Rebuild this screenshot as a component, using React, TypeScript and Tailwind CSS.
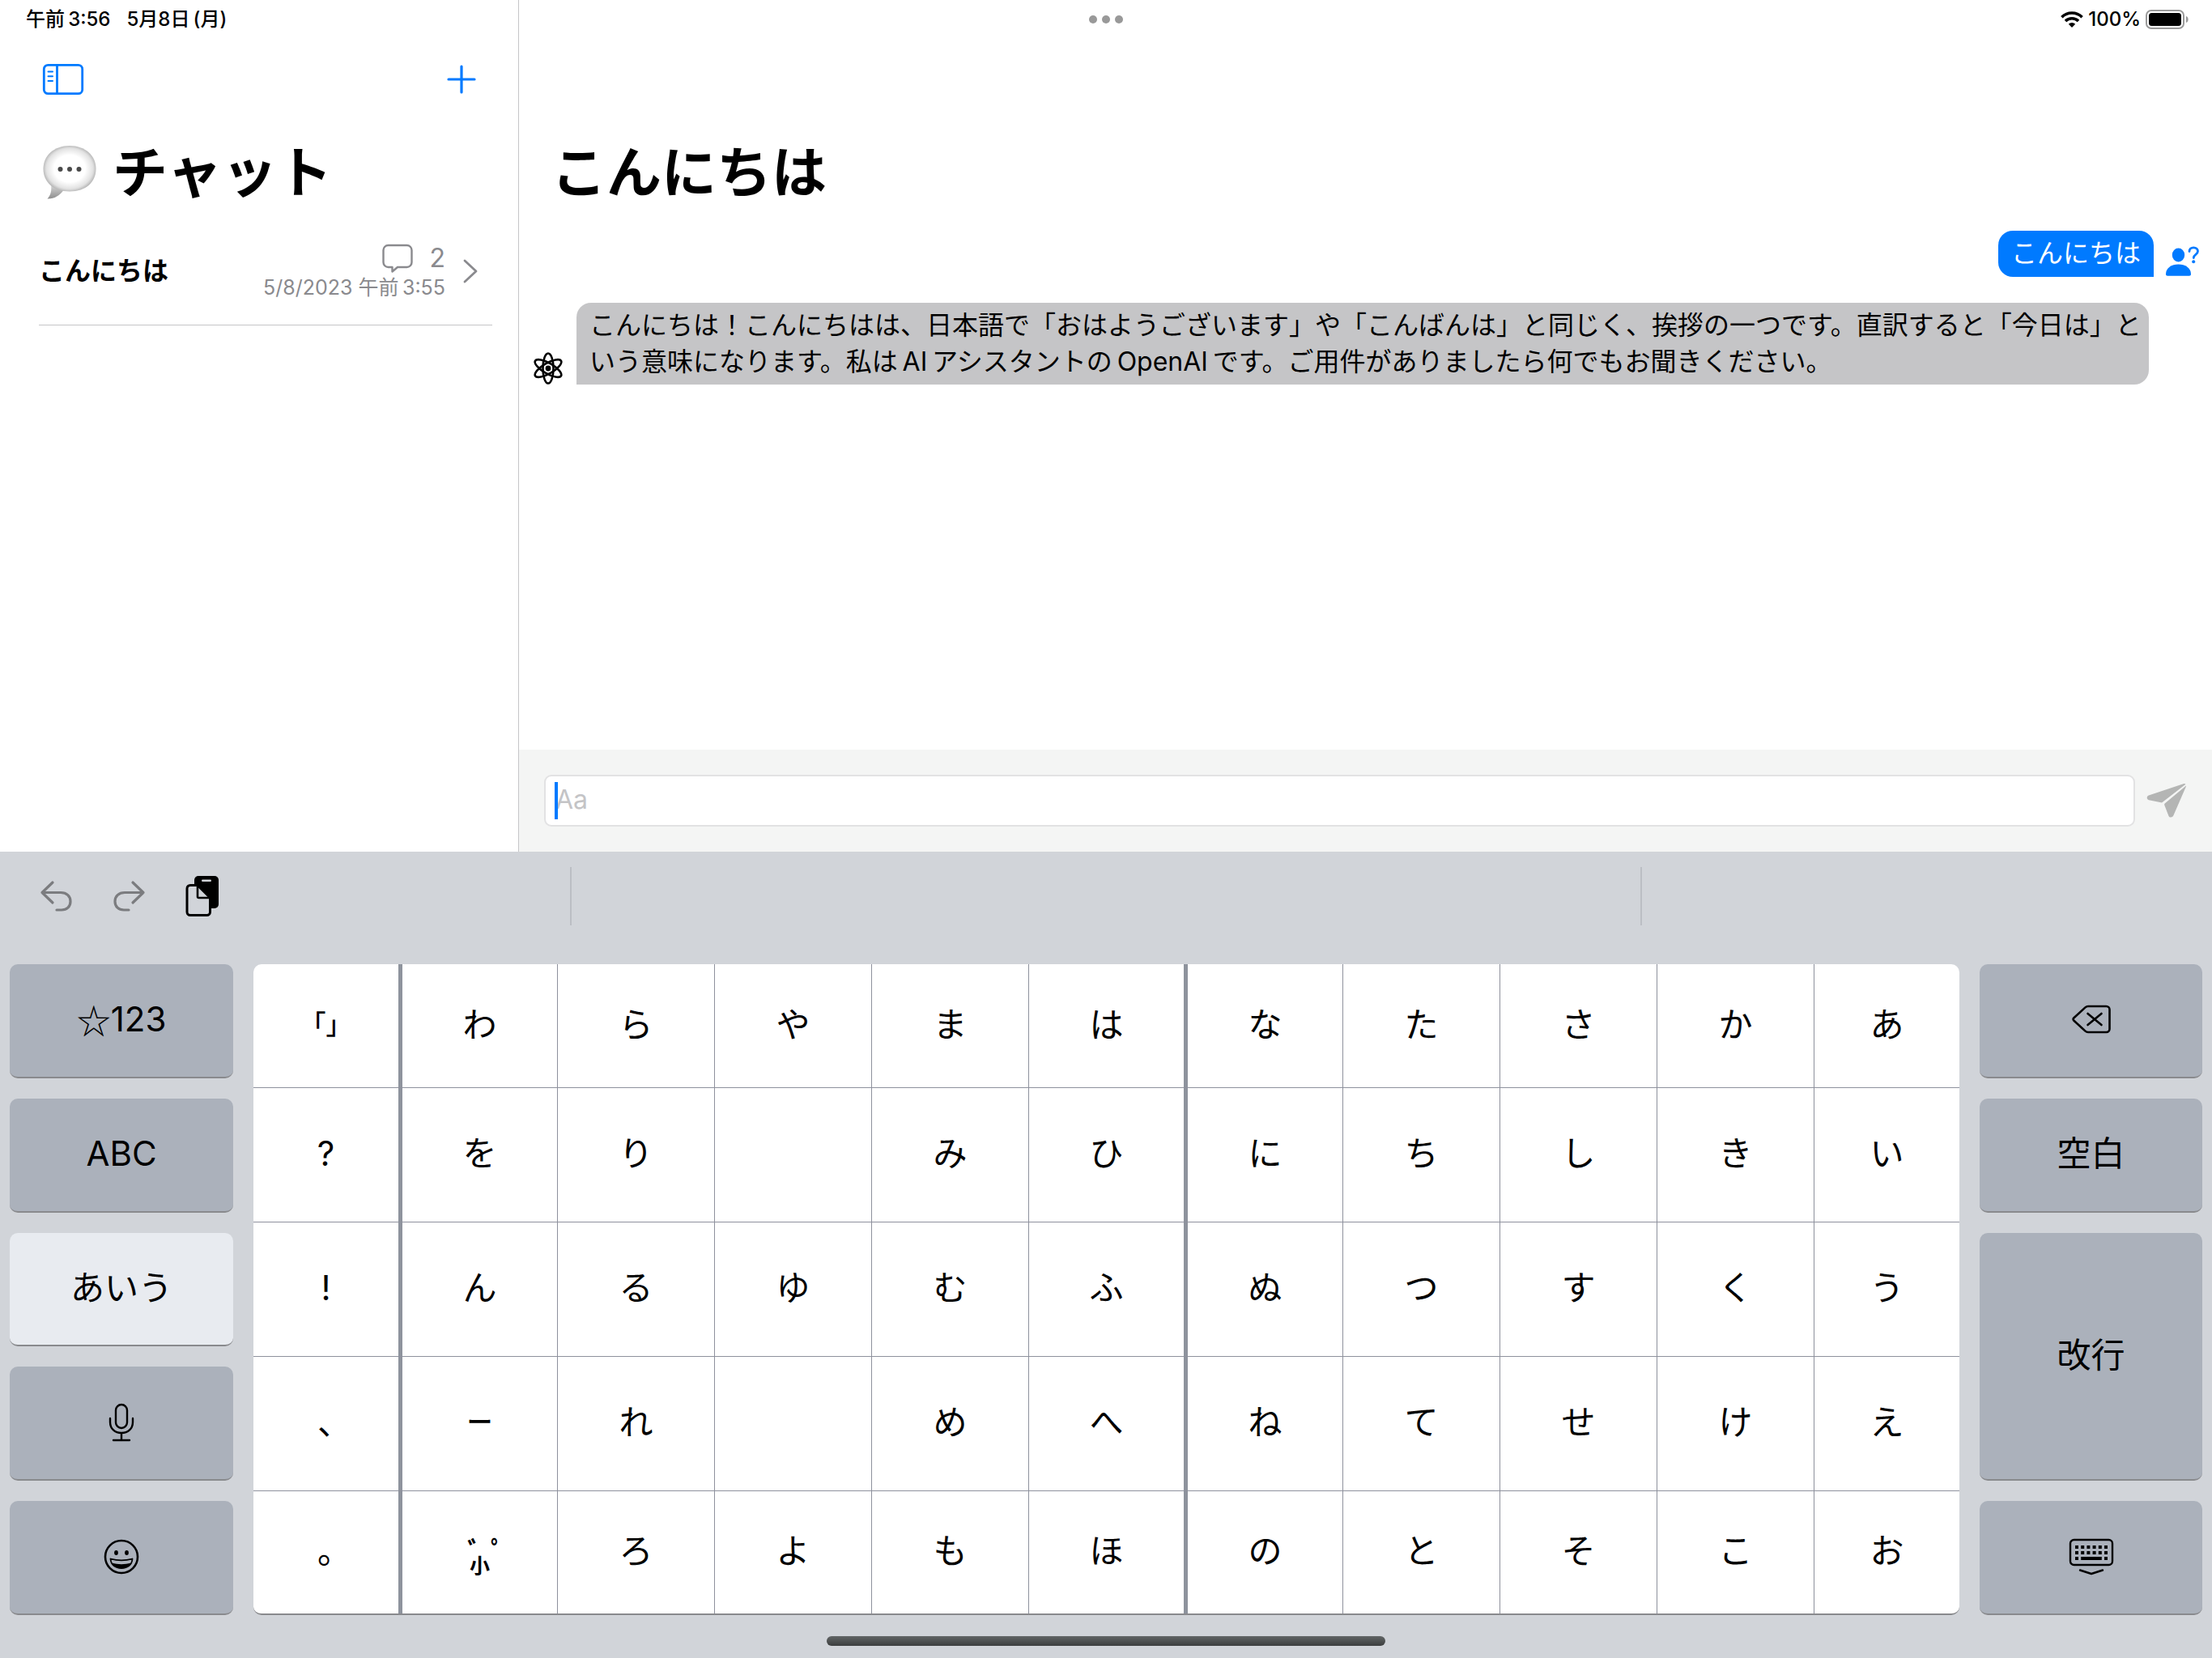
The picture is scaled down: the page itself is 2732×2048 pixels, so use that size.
import type { ReactNode } from "react";

const kanaRows = [
  ["「」", "わ", "ら", "や", "ま", "は", "な", "た", "さ", "か", "あ"],
  ["?", "を", "り", "", "み", "ひ", "に", "ち", "し", "き", "い"],
  ["!", "ん", "る", "ゆ", "む", "ふ", "ぬ", "つ", "す", "く", "う"],
  ["、", "ー", "れ", "", "め", "へ", "ね", "て", "せ", "け", "え"],
  ["。", "小", "ろ", "よ", "も", "ほ", "の", "と", "そ", "こ", "お"],
];

// Thin spaces separate Japanese from Latin text
const reply =
  "こんにちは！こんにちはは、日本語で「おはようございます」や「こんばんは」と同じく、挨拶の一つです。直訳すると「今日は」という意味になります。私は\u2009AI\u2009アシスタントの\u2009OpenAI\u2009です。ご用件がありましたら何でもお聞きください。";

function StatusBar() {
  return (
    <div className="absolute inset-x-0 top-0 flex h-12 items-center justify-between pl-8 pr-7 text-2xl font-medium">
      <div className="flex gap-5">
        <span>{"午前\u20093:56"}</span>
        <span>{"5月8日\u2009(月)"}</span>
      </div>
      <button type="button" aria-label="マルチタスク" className="absolute left-1/2 flex -translate-x-1/2 gap-[6px]">
        <span className="size-[10px] rounded-full bg-[#999999]" />
        <span className="size-[10px] rounded-full bg-[#999999]" />
        <span className="size-[10px] rounded-full bg-[#999999]" />
      </button>
      <div className="flex items-center gap-[6px]">
        <svg viewBox="0 0 28 20" className="h-5 w-7" fill="none" stroke="currentColor">
          <path d="M1.4 7.2a18 18 0 0 1 25.2 0" strokeWidth="3.6" />
          <path d="M6 12a11.500 11.500 0 0 1 16 0" strokeWidth="3.6" />
          <path d="M14 20l-4.200-4.300a6 6 0 0 1 8.400 0z" fill="currentColor" stroke="none" />
        </svg>
        <span>100%</span>
        <svg viewBox="0 0 54 24" className="h-6 w-[54px]">
          <rect x="1" y="1" width="46" height="22" rx="6" fill="none" stroke="#9a9a9a" strokeWidth="2" />
          <rect x="4" y="4" width="40" height="16" rx="3.500" />
          <path d="M50 8c3.500 1 3.500 7 0 8z" fill="#9a9a9a" />
        </svg>
      </div>
    </div>
  );
}

function SpeechBalloon() {
  return (
    <svg viewBox="0 0 66 68" className="h-[68px] w-[66px]">
      <defs>
        <radialGradient id="balloon" cx="0.5" cy="0.5" r="0.54">
          <stop offset="0.55" stopColor="#ffffff" />
          <stop offset="0.82" stopColor="#e2e2e2" />
          <stop offset="1" stopColor="#a4a4a4" />
        </radialGradient>
        <linearGradient id="tail" x1="0" y1="0" x2="0" y2="1">
          <stop offset="0" stopColor="#dcdcdc" />
          <stop offset="1" stopColor="#8e8e8e" />
        </linearGradient>
      </defs>
      <path d="M10 48c1 8 0 14-4.500 18.500C13 67 21 63 26 55z" fill="url(#tail)" />
      <path d="M33 1c19 0 32.500 12 32.500 28.500S53 57.500 33 57.500.500 46 .500 29.500 14 1 33 1z" fill="url(#balloon)" />
      <circle cx="21.500" cy="30" r="3" fill="#4a4a4a" />
      <circle cx="33" cy="30" r="3" fill="#4a4a4a" />
      <circle cx="44.500" cy="30" r="3" fill="#4a4a4a" />
    </svg>
  );
}

function Sidebar() {
  return (
    <aside className="w-[641px] shrink-0 border-r border-[#c6c6c8] pt-[78px]">
      <div className="flex h-10 items-center justify-between px-[52px] text-[#007aff]">
        <button type="button" aria-label="サイドバー">
          <svg viewBox="0 0 52 40" className="h-10 w-[52px]" fill="none" stroke="currentColor" strokeWidth="2.800" strokeLinecap="round">
            <rect x="2.300" y="2.300" width="47.400" height="35.400" rx="5" />
            <path d="M18.500 2.300v35.400" />
            <path d="M7.500 10.500h5.500M7.500 16.300h5.500M7.500 22h5.500" strokeWidth="2" />
          </svg>
        </button>
        <button type="button" aria-label="新規チャット">
          <svg viewBox="0 0 36 36" className="size-9" fill="none" stroke="currentColor" strokeWidth="3.200" strokeLinecap="round">
            <path d="M18 2v32M2 18h32" />
          </svg>
        </button>
      </div>
      <h1 className="mt-10 flex h-[100px] items-center gap-5 pt-[10px] pl-[53px] text-[68px] leading-none font-bold">
        <SpeechBalloon />
        チャット
      </h1>
      <a href="#chat" className="mt-6 mr-8 ml-12 flex h-[120px] items-center border-b border-[#c6c6c8] pr-[18px] pb-[13px]">
        <span className="flex-1 text-[32px] font-bold">こんにちは</span>
        <span className="flex flex-col items-end text-[#8a8a8e]">
          <span className="flex items-center gap-5 text-[32px] leading-10">
            <svg viewBox="0 0 38 36" className="h-9 w-[38px]" fill="none" stroke="currentColor" strokeWidth="2.400" strokeLinejoin="round">
              <path d="M7.500 2h23a6 6 0 0 1 6 6v15a6 6 0 0 1-6 6H19l-6.500 5.500V29h-5a6 6 0 0 1-6-6V8a6 6 0 0 1 6-6z" />
            </svg>
            2
          </span>
          <span className="text-[25px] leading-8">{"5/8/2023 午前\u20093:55"}</span>
        </span>
        <svg viewBox="0 0 18 30" className="ml-[22px] h-[30px] w-[18px]" fill="none" stroke="#8a8a8e" strokeWidth="2.800" strokeLinecap="round" strokeLinejoin="round">
          <path d="M2 2l14 13L2 28" />
        </svg>
      </a>
    </aside>
  );
}

function AtomIcon() {
  return (
    <svg viewBox="0 0 38 42" className="h-[42px] w-[38px] shrink-0" fill="none" stroke="black" strokeWidth="2.600">
      <ellipse cx="19" cy="22" rx="6.500" ry="18.500" />
      <ellipse cx="19" cy="22" rx="6.500" ry="18.500" transform="rotate(60 19 22)" />
      <ellipse cx="19" cy="22" rx="6.500" ry="18.500" transform="rotate(-60 19 22)" />
      <circle cx="19" cy="22" r="3.400" fill="black" stroke="none" />
    </svg>
  );
}

function PersonIcon() {
  return (
    <svg viewBox="0 0 42 38" className="h-[38px] w-[42px] shrink-0" fill="#007aff">
      <ellipse cx="16.500" cy="11" rx="7.700" ry="8.500" />
      <path d="M1 34.500C1 27 8 22.500 16.500 22.500S32 27 32 34.500c0 1.600-.8 2.200-2.200 2.200H3.200C1.800 36.700 1 36.100 1 34.500z" />
      <path d="M30 6.500c0-3 2.200-4.700 5.200-4.700s5.300 1.800 5.300 4.500c0 4.300-5.200 3.800-5.200 8.200" fill="none" stroke="#007aff" strokeWidth="2.800" strokeLinecap="round" />
      <circle cx="35.200" cy="19.300" r="2" />
    </svg>
  );
}

function Chat() {
  return (
    <main className="flex flex-1 flex-col">
      <h2 className="mt-[163px] pl-10 text-[68px] leading-[100px] font-bold">こんにちは</h2>
      <div className="mt-[22px] flex items-end justify-end gap-[14px] pr-4">
        <p className="rounded-[18px] rounded-br-none bg-[#007aff] px-4 pt-[5px] pb-[7px] text-[32px] leading-[45px] text-white">
          こんにちは
        </p>
        <PersonIcon />
      </div>
      <div className="mt-8 flex items-end gap-4 pr-[78px] pl-[17px]">
        <AtomIcon />
        <p className="flex-1 rounded-[18px] rounded-bl-none bg-[#c5c5c7] pt-[5px] pb-[6px] pl-4 text-[32px] leading-[45px]">
          {reply}
        </p>
      </div>
      <form className="mt-auto flex h-[126px] items-center gap-[14px] bg-[#f4f5f4] pr-[31px] pl-[31px]">
        <div className="relative flex-1">
          <input
            aria-label="メッセージ"
            placeholder="Aa"
            className="block h-16 w-full rounded-[9px] border-2 border-[#e2e2e3] bg-white pb-1 pl-3 text-[32px] outline-none placeholder:text-[#c4c4c6]"
          />
          <span className="absolute top-[9px] left-[13px] h-[46px] w-1 bg-[#007aff]" />
        </div>
        <button type="button" aria-label="送信">
          <svg viewBox="0 0 50 44" className="h-11 w-[50px]" fill="#b4b5b4">
            <path d="M2.800 15.500L45.500 1.200c1.500-.5 2.400-.1 2.900.6L20 23.800c-.6.500-1.200.7-2 .5L3 21.200c-3-.8-3-4.700-.2-5.700z" />
            <path d="M49 3.500c.1.700-.1 1.300-.5 2L33.300 40.600c-1.200 2.700-5 2.700-6-.2l-5-13c-.3-.9-.2-1.400.4-2z" />
          </svg>
        </button>
      </form>
    </main>
  );
}

function Key({ label, className = "bg-[#abb1bb]", children }: { label?: string; className?: string; children: ReactNode }) {
  return (
    <button
      type="button"
      aria-label={label}
      className={`flex items-center justify-center rounded-[10px] border-b-2 border-[#898a8d] pb-[2px] text-[42px] leading-none ${className}`}
    >
      {children}
    </button>
  );
}

function ShortcutBar() {
  return (
    <div className="flex h-[110px] items-center pl-12">
      <button type="button" aria-label="取り消す" className="text-[#7b7c7f]">
        <svg viewBox="0 0 42 42" className="size-[42px]" fill="none" stroke="currentColor" strokeWidth="3.200" strokeLinecap="round" strokeLinejoin="round">
          <path d="M17 4L4 16.500 17 29M4 16.500h23c7.500 0 12 4.500 12 11s-4.500 10.500-11 10.500h-6" />
        </svg>
      </button>
      <button type="button" aria-label="やり直す" className="ml-[49px] text-[#7b7c7f]">
        <svg viewBox="0 0 42 42" className="size-[42px]" fill="none" stroke="currentColor" strokeWidth="3.200" strokeLinecap="round" strokeLinejoin="round">
          <path d="M25 4l13 12.500L25 29M38 16.500H15c-7.500 0-12 4.500-12 11S7.500 38 14 38h6" />
        </svg>
      </button>
      <button type="button" aria-label="ペースト" className="ml-12">
        <svg viewBox="0 0 42 50" className="h-[50px] w-[42px]">
          <path d="M16 0h20a5 5 0 0 1 5 5v30a5 5 0 0 1-5 5H11V5a5 5 0 0 1 5-5z" />
          <rect x="20" y="4.500" width="12" height="2.600" rx="1.300" fill="#d1d4d9" />
          <path d="M15 11.500H6a4 4 0 0 0-4 4v29a4 4 0 0 0 4 4h20.500a4 4 0 0 0 4-4V27z" fill="#d1d4d9" stroke="black" strokeWidth="3" strokeLinejoin="round" />
          <path d="M15 12v13.500a1.500 1.500 0 0 0 1.500 1.500H30" fill="none" stroke="black" strokeWidth="2.600" />
        </svg>
      </button>
      <div className="ml-[433px] h-[72px] w-[1324px] border-x-2 border-[#bbbec4]" />
    </div>
  );
}

function KanaKey({ char, column }: { char: string; column: number }) {
  const thick = column === 0 || column === 5;
  const last = column === 10;
  const edge = last ? "" : thick ? "border-r-[5px] border-[#8e939d]" : "border-r border-[#8e919d]";
  if (char === "小") {
    return (
      <button type="button" aria-label="濁点・半濁点・小文字" className={`flex flex-col items-center justify-center pt-4 leading-4 font-bold ${edge}`}>
        <span className="flex gap-[11px] pl-4 text-[36px] leading-4">
          <span>ﾞ</span>
          <span>ﾟ</span>
        </span>
        <span className="text-[25px] leading-4">小</span>
      </button>
    );
  }
  const small = char === "「」" || char === "ー";
  return (
    <button
      type="button"
      className={`pb-[3px] leading-none [font-feature-settings:'halt'] ${small ? "text-[32px] font-medium" : "text-[42px]"} ${edge}`}
    >
      {char}
    </button>
  );
}

function Keyboard() {
  return (
    <section className="flex h-[996px] flex-col bg-[#d1d4d9]">
      <ShortcutBar />
      <div className="mt-[29px] flex h-[804px] gap-[25px] px-3">
        <div className="grid w-[276px] grid-rows-5 gap-[25px]">
          <Key>
            <span className="font-['Noto_Sans_CJK_JP']">☆</span>123
          </Key>
          <Key>ABC</Key>
          <Key className="bg-[#e8ebf0]">あいう</Key>
          <Key label="音声入力">
            <svg viewBox="0 0 32 48" className="h-12 w-8" fill="none" stroke="currentColor" strokeWidth="2.400" strokeLinecap="round">
              <rect x="9" y="2" width="14" height="29" rx="7" />
              <path d="M2 19v4.500C2 32 8 37 16 37s14-5 14-13.500V19M16 37v9M6 46h20" />
            </svg>
          </Key>
          <Key label="絵文字">
            <svg viewBox="0 0 44 44" className="size-11" fill="none" stroke="currentColor" strokeWidth="2.600">
              <circle cx="22" cy="22" r="20" />
              <ellipse cx="15.500" cy="17" rx="2.400" ry="3" fill="currentColor" stroke="none" />
              <ellipse cx="28.500" cy="17" rx="2.400" ry="3" fill="currentColor" stroke="none" />
              <path d="M8.500 24.500c8.500 2.300 18.500 2.300 27 0C35 32 29.500 36 22 36S9 32 8.500 24.500z" strokeWidth="1.800" strokeLinejoin="round" />
              <path d="M10.500 29.500c7 2.200 16 2.200 23 0C31.500 34 27.500 36 22 36s-9.500-2-11.500-6.500z" fill="currentColor" stroke="none" />
            </svg>
          </Key>
        </div>
        <div className="grid flex-1 grid-rows-[153fr_166fr_166fr_166fr_151fr] divide-y divide-[#8e919d] overflow-hidden rounded-[10px] border-b-2 border-b-[#898a8d] bg-white">
          {kanaRows.map((row, r) => (
            <div
              key={r}
              className="grid grid-cols-[184fr_192fr_repeat(3,194fr)_196fr_192fr_repeat(3,194fr)_179fr]"
            >
              {row.map((char, c) => (
                <KanaKey key={c} char={char} column={c} />
              ))}
            </div>
          ))}
        </div>
        <div className="grid w-[275px] grid-rows-5 gap-[25px]">
          <Key label="削除">
            <svg viewBox="0 0 48 36" className="h-9 w-12" fill="none" stroke="currentColor" strokeWidth="2.600" strokeLinecap="round" strokeLinejoin="round">
              <path d="M20 2h22.500a4 4 0 0 1 4 4v24a4 4 0 0 1-4 4H20c-1.500 0-2.400-.4-3.500-1.400L2.500 19.800c-1.200-1.200-1.200-2.400 0-3.600L16.500 3.400C17.600 2.400 18.500 2 20 2z" />
              <path d="M19.500 11l17 14M36.500 11l-17 14" />
            </svg>
          </Key>
          <Key>空白</Key>
          <Key className="row-span-2 bg-[#abb1bb]">改行</Key>
          <Key label="キーボードを閉じる">
            <svg viewBox="0 0 56 46" className="h-[46px] w-14" fill="none" stroke="currentColor" strokeWidth="2.400" strokeLinecap="round" strokeLinejoin="round">
              <rect x="2" y="2" width="52" height="31" rx="4.500" />
              <path d="M8 11h40" strokeWidth="4" strokeDasharray="4 3.200" strokeLinecap="butt" />
              <path d="M8 18h40" strokeWidth="4" strokeDasharray="4 3.200" strokeLinecap="butt" />
              <path d="M8 25h4M15.200 25h25.600M44 25h4" strokeWidth="4" strokeLinecap="butt" />
              <path d="M14 39.500l14 4.500 14-4.500" />
            </svg>
          </Key>
        </div>
      </div>
      <div className="mx-auto mt-[26px] h-3 w-[690px] rounded-full bg-linear-to-b from-[#626667] to-[#3c3e3e]" />
    </section>
  );
}

export default function App() {
  return (
    <div className="relative flex min-h-screen flex-col bg-white font-[Inter,'Noto_Sans_CJK_JP',sans-serif] text-black" lang="ja">
      <StatusBar />
      <div className="flex flex-1">
        <Sidebar />
        <Chat />
      </div>
      <Keyboard />
    </div>
  );
}
